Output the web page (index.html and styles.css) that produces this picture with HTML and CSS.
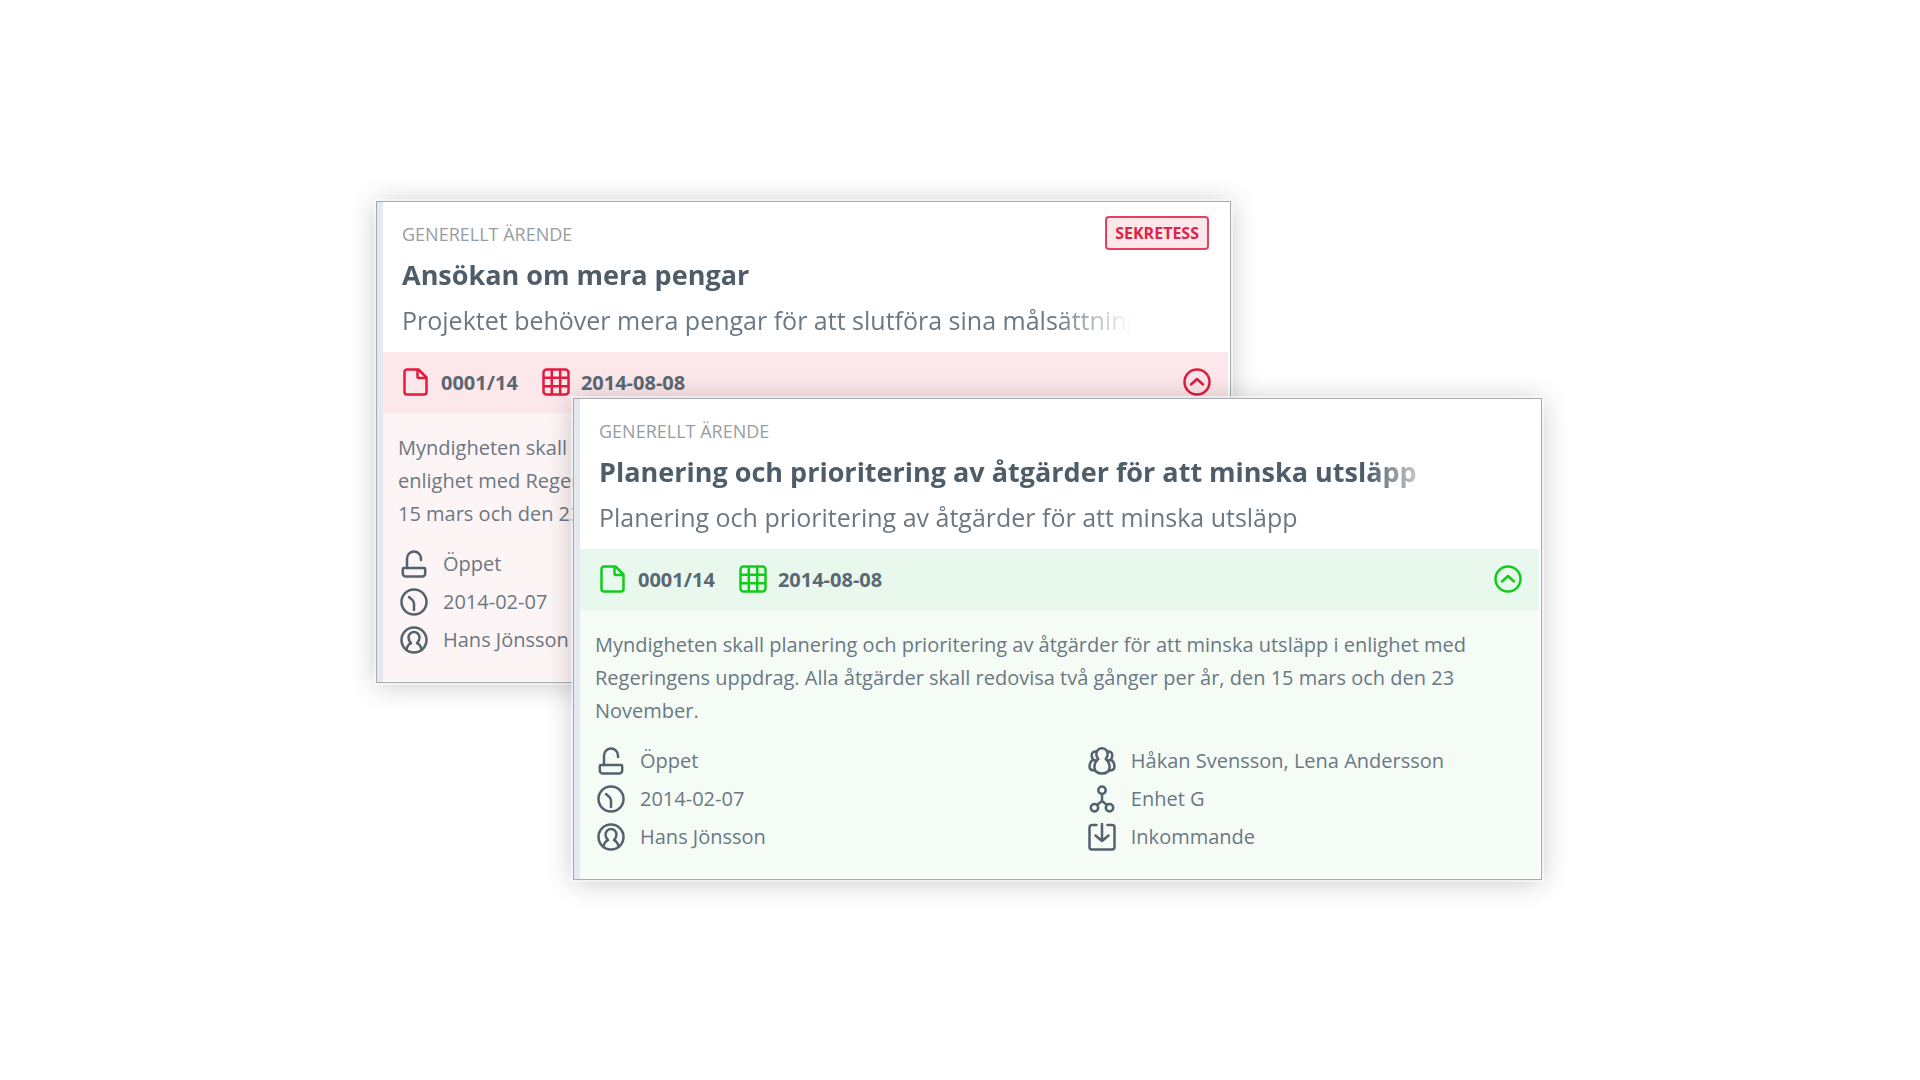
FILE: index.html
```html
<!DOCTYPE html>
<html lang="sv">
<head>
<meta charset="utf-8">
<meta name="viewport" content="width=device-width, initial-scale=1">
<title>Ärenden</title>
<link rel="stylesheet" href="styles.css">
</head>
<body>
<svg class="sprite" aria-hidden="true">
  <symbol id="i-file" viewBox="0 0 28 28"><path d="M5 1.5h11.500l8 8v14.500a2.500 2.500 0 0 1-2.500 2.500H5A2.500 2.500 0 0 1 2.500 24V4A2.500 2.500 0 0 1 5 1.500z"/><path d="M15.500 2v6.500q0 1.500 1.500 1.500h7"/></symbol>
  <symbol id="i-grid" viewBox="0 0 28 28"><rect x="1.500" y="1.500" width="25" height="25" rx="3"/><path d="M9.800 2v24M18.200 2v24M2 9.800h24M2 18.200h24"/></symbol>
  <symbol id="i-up" viewBox="0 0 28 28"><circle cx="14" cy="14" r="12.500"/><path d="M8 16.500l6-5.500 6 5.500"/></symbol>
  <symbol id="i-lock" viewBox="0 0 28 28"><path d="M4 18h20a1.200 1.200 0 0 1 1.200 1.200v4.300a3 3 0 0 1-3 3H5.800a3 3 0 0 1-3-3v-4.300A1.200 1.200 0 0 1 4 18z"/><path d="M7 18V8.500a7 7 0 0 1 14 0V10"/></symbol>
  <symbol id="i-clock" viewBox="0 0 28 28"><circle cx="14" cy="14" r="12.500"/><path d="M9 9l3.500 3.200q1.500 1.500 1.500 3.500V22"/></symbol>
  <symbol id="i-user" viewBox="0 0 28 28"><circle cx="14" cy="14" r="12.500"/><path d="M6.500 24c.3-3.500 1.500-5.300 4.500-6.800-1.500-1.700-2.500-3.500-2.500-5.700a5.500 5.500 0 0 1 11 0c0 2.200-1 4-2.500 5.700 3 1.500 4.200 3.300 4.500 6.800"/></symbol>
  <symbol id="i-group" viewBox="0 0 28 28"><path d="M10.200 12C9 10.500 8.300 9 8.300 7a5.700 5.700 0 0 1 11.400 0c0 2-.7 3.500-1.900 5 2.700 2.500 4.200 5.500 3.700 9-.4 3.500-3.500 5.500-7.500 5.500S6.900 24.500 6.500 21c-.5-3.500 1-6.500 3.700-9z"/><path d="M8.300 4.500C5.500 4 3.500 6 3.700 8.700c.1 1.500.5 2.500 1.300 3.800-2.500 2-3.500 4.500-3.500 7 0 2.500 2 4 5 4M5 12.500q1.500 1 3.300 1M19.700 4.500C22.500 4 24.500 6 24.300 8.700c-.1 1.500-.5 2.500-1.300 3.800 2.500 2 3.500 4.500 3.500 7 0 2.500-2 4-5 4M23 12.500q-1.500 1-3.300 1"/></symbol>
  <symbol id="i-unit" viewBox="0 0 28 28"><circle cx="14" cy="5.200" r="3.700"/><circle cx="6.500" cy="22.800" r="3.700"/><circle cx="21.500" cy="22.800" r="3.700"/><path d="M14 9v7M9 20l5-4 5 4"/></symbol>
  <symbol id="i-in" viewBox="0 0 28 28"><path d="M8.500 2H4a2.500 2.500 0 0 0-2.500 2.500V24A2.500 2.500 0 0 0 4 26.500h20a2.500 2.500 0 0 0 2.500-2.500V4.500A2.500 2.500 0 0 0 24 2h-4.500M14 1v17M7.500 12.500l6.500 5.500 6.500-5.500"/></symbol>
</svg>

<main class="stage">
  <article class="card card--red">
    <header class="head">
      <div class="head-top">
        <p class="kind">GENERELLT ÄRENDE</p>
        <span class="badge">SEKRETESS</span>
      </div>
      <h2 class="title fade">Ansökan om mera pengar</h2>
      <p class="subtitle fade">Projektet behöver mera pengar för att slutföra sina målsättningar</p>
    </header>
    <div class="band">
      <span class="tag"><svg class="icon"><use href="#i-file"/></svg>0001/14</span>
      <span class="tag"><svg class="icon"><use href="#i-grid"/></svg><time datetime="2014-08-08">2014-08-08</time></span>
      <button class="toggle" type="button" aria-label="Fäll ihop"><svg class="icon"><use href="#i-up"/></svg></button>
    </div>
    <div class="content">
      <p class="text">Myndigheten skall planering och prioritering av åtgärder för att minska utsläpp i enlighet med Regeringens uppdrag. Alla åtgärder skall redovisa två gånger per år, den 15 mars och den 23 November.</p>
      <div class="facts">
        <ul class="list">
          <li class="fact"><svg class="icon"><use href="#i-lock"/></svg>Öppet</li>
          <li class="fact"><svg class="icon"><use href="#i-clock"/></svg>2014-02-07</li>
          <li class="fact"><svg class="icon"><use href="#i-user"/></svg>Hans Jönsson</li>
        </ul>
      </div>
    </div>
  </article>

  <article class="card card--green">
    <header class="head">
      <div class="head-top">
        <p class="kind">GENERELLT ÄRENDE</p>
      </div>
      <h2 class="title fade">Planering och prioritering av åtgärder för att minska utsläpp</h2>
      <p class="subtitle fade">Planering och prioritering av åtgärder för att minska utsläpp</p>
    </header>
    <div class="band">
      <span class="tag"><svg class="icon"><use href="#i-file"/></svg>0001/14</span>
      <span class="tag"><svg class="icon"><use href="#i-grid"/></svg><time datetime="2014-08-08">2014-08-08</time></span>
      <button class="toggle" type="button" aria-label="Fäll ihop"><svg class="icon"><use href="#i-up"/></svg></button>
    </div>
    <div class="content">
      <p class="text">Myndigheten skall planering och prioritering av åtgärder för att minska utsläpp i enlighet med Regeringens uppdrag. Alla åtgärder skall redovisa två gånger per år, den 15 mars och den 23 November.</p>
      <div class="facts">
        <ul class="list">
          <li class="fact"><svg class="icon"><use href="#i-lock"/></svg>Öppet</li>
          <li class="fact"><svg class="icon"><use href="#i-clock"/></svg>2014-02-07</li>
          <li class="fact"><svg class="icon"><use href="#i-user"/></svg>Hans Jönsson</li>
        </ul>
        <ul class="list">
          <li class="fact"><svg class="icon"><use href="#i-group"/></svg>Håkan Svensson, Lena Andersson</li>
          <li class="fact"><svg class="icon"><use href="#i-unit"/></svg>Enhet G</li>
          <li class="fact"><svg class="icon"><use href="#i-in"/></svg>Inkommande</li>
        </ul>
      </div>
    </div>
  </article>
</main>
</body>
</html>
```
FILE: styles.css
```css
* {
  box-sizing: border-box;
  margin: 0;
  padding: 0;
}

body {
  min-height: 100vh;
  display: grid;
  align-items: center;
  justify-items: center;
  background: #fff;
  color: #6b7883;
  font-family: "Open Sans", "Noto Sans", sans-serif;
  font-size: 20px;
  line-height: 33px;
}

.sprite {
  position: absolute;
  width: 0;
  height: 0;
}

/* The two cards share one grid row and overlap in the middle column. */
.stage {
  width: 100%;
  max-width: 1168px;
  padding-right: 2px;
  display: grid;
  grid-template-columns: 197fr 658fr 311fr;
  align-items: start;
}

.card {
  grid-row: 1;
  min-width: 0;
  padding: 1px 2px 1px 1px;
  border: 1px solid #a6abaf;
  background: linear-gradient(to right, #e3e9ee 6px, #fff 6px);
  box-shadow: 0 0 0 2px rgba(255, 255, 255, 0.5), 0 2px 26px rgba(0, 0, 0, 0.22);
}

.card--red {
  --accent: #e31b3f;
  --band: #fce7ea;
  --tint: #fdf4f5;
  grid-column: 1 / 3;
}

.card--green {
  --accent: #12cb1c;
  --band: #e8f8ec;
  --tint: #f5fcf6;
  grid-column: 2 / 4;
  margin-top: 197px;
}

.head,
.band,
.content {
  margin-left: 5px;
}

.head {
  height: 149px;
  padding: 13px 19px 0 19px;
  background: #fff;
}

.head-top {
  display: flex;
  justify-content: space-between;
  height: 36px;
}

.kind {
  color: #979da1;
  font-size: 18px;
  line-height: 36px;
}

.badge {
  height: 34px;
  padding: 0 8px;
  border: 2px solid #e5415f;
  border-radius: 4px;
  background: #fce7ea;
  color: #e02446;
  font-size: 16px;
  font-weight: 700;
  line-height: 30px;
}

.title,
.subtitle {
  margin-right: 78px;
  overflow: hidden;
  white-space: nowrap;
}

.title {
  color: #4e5d69;
  font-size: 27px;
  font-weight: 700;
  line-height: 46px;
}

.subtitle {
  font-size: 25px;
  line-height: 44px;
}

.fade {
  -webkit-mask-image: linear-gradient(to left, transparent, #000 75px);
  mask-image: linear-gradient(to left, transparent, #000 75px);
}

.band {
  display: flex;
  align-items: center;
  gap: 24px;
  height: 61px;
  padding: 0 17px 0 19px;
  background: var(--band);
}

.tag {
  display: flex;
  align-items: center;
  gap: 11px;
  color: #5b6873;
  font-weight: 700;
}

.icon {
  flex: none;
  display: block;
  width: 28px;
  height: 28px;
  fill: none;
  stroke: currentColor;
  stroke-width: 2.5;
  stroke-linejoin: round;
  stroke-linecap: round;
}

.band .icon {
  color: var(--accent);
}

.toggle {
  margin-left: auto;
  border: 0;
  background: none;
  cursor: pointer;
}

.content {
  padding: 18px 16px 22px 15px;
  background: var(--tint);
}

.facts {
  display: grid;
  grid-template-columns: 53fr 47fr;
  margin-top: 15px;
  padding-left: 2px;
}

.list {
  list-style: none;
}

.fact {
  display: flex;
  align-items: center;
  gap: 15px;
  line-height: 38px;
}

.fact .icon {
  color: #54626e;
}
```
